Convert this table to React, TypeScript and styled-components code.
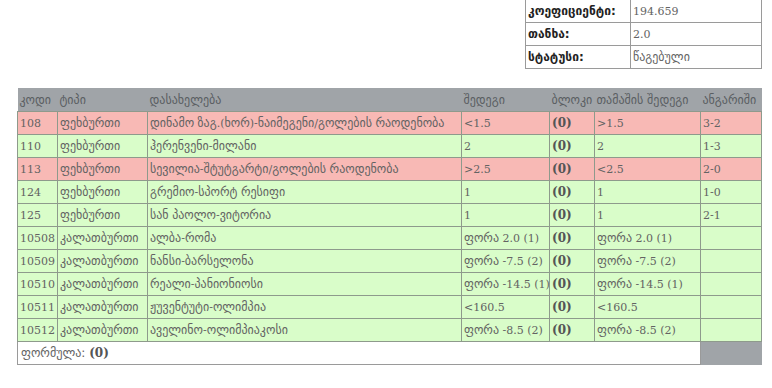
import styled, { createGlobalStyle } from "styled-components";

const GlobalStyle = createGlobalStyle`
  body {
    margin: 0;
    background: #fff;
    font-family: "DejaVu Sans", sans-serif;
    font-size: 12px;
    color: #636363;
  }
`;

const Page = styled.div`
  display: flex;
  flex-direction: column;
  align-items: flex-end;
  gap: 19px;
  padding: 0 10px 0 18px;
  width: 744px;
`;

const InfoTable = styled.table`
  border-collapse: collapse;
  table-layout: fixed;
  width: 237px;
  margin-top: -1px;
  td {
    border: 1px solid #9a9a9a;
    height: 22px;
    padding: 0 2px;
    white-space: nowrap;
  }
`;

const Label = styled.td`
  width: 100px;
  font-weight: bold;
  color: #222;
`;

const MainTable = styled.table`
  border-collapse: collapse;
  table-layout: fixed;
  width: 744px;
`;

const Head = styled.th`
  background: #a0a4a8;
  color: #5a5e62;
  font-weight: normal;
  text-align: left;
  height: 23px;
  padding: 0 2px;
  white-space: nowrap;
  overflow: visible;
`;

const Row = styled.tr<{ $lost: boolean }>`
  background: ${(p) => (p.$lost ? "#f8b9b5" : "#d9fdc9")};
`;

const Cell = styled.td`
  border: 1px solid #8e9a8c;
  height: 22px;
  padding: 0 2px;
  white-space: nowrap;
  overflow: hidden;
`;

// digits and punctuation look narrower and lighter than the georgian letters
const Latin = styled.span<{ $big?: boolean }>`
  font-family: "DejaVu Serif", serif;
  font-size: ${(p) => (p.$big ? "12px" : "11px")};
`;

const Geo = styled.span``;

const Zero = styled(Latin).attrs({ $big: true })`
  font-weight: bold;
  color: #555;
`;

const FormulaCell = styled.td`
  border: 1px solid #9a9a9a;
  height: 22px;
  padding: 0 3px;
  background: #fff;
`;

const GrayCell = styled.td`
  background: #a0a4a8;
`;

const Txt = ({ children }: { children: string }) => {
  const runs = children.match(/[\u10A0-\u10FF]+|[^\u10A0-\u10FF]+/g) || [];
  return (
    <>
      {runs.map((r, i) =>
        /[\u10A0-\u10FF]/.test(r) ? <Geo key={i}>{r}</Geo> : <Latin key={i}>{r}</Latin>
      )}
    </>
  );
};

type Game = {
  code: string;
  type: string;
  name: string;
  pick: string;
  result: string;
  score: string;
  lost?: boolean;
};

const games: Game[] = [
  { code: "108", type: "ფეხბურთი", name: "დინამო ზაგ.(ხორ)-ნაიმეგენი/გოლების რაოდენობა", pick: "<1.5", result: ">1.5", score: "3-2", lost: true },
  { code: "110", type: "ფეხბურთი", name: "ჰერენვენი-მილანი", pick: "2", result: "2", score: "1-3" },
  { code: "113", type: "ფეხბურთი", name: "სევილია-შტუტგარტი/გოლების რაოდენობა", pick: ">2.5", result: "<2.5", score: "2-0", lost: true },
  { code: "124", type: "ფეხბურთი", name: "გრემიო-სპორტ რესიფი", pick: "1", result: "1", score: "1-0" },
  { code: "125", type: "ფეხბურთი", name: "სან პაოლო-ვიტორია", pick: "1", result: "1", score: "2-1" },
  { code: "10508", type: "კალათბურთი", name: "ალბა-რომა", pick: "ფორა 2.0 (1)", result: "ფორა 2.0 (1)", score: "" },
  { code: "10509", type: "კალათბურთი", name: "ნანსი-ბარსელონა", pick: "ფორა -7.5 (2)", result: "ფორა -7.5 (2)", score: "" },
  { code: "10510", type: "კალათბურთი", name: "რეალი-პანიონიოსი", pick: "ფორა -14.5 (1)", result: "ფორა -14.5 (1)", score: "" },
  { code: "10511", type: "კალათბურთი", name: "ჟუვენტუტი-ოლიმპია", pick: "<160.5", result: "<160.5", score: "" },
  { code: "10512", type: "კალათბურთი", name: "აველინო-ოლიმპიაკოსი", pick: "ფორა -8.5 (2)", result: "ფორა -8.5 (2)", score: "" },
];

const widths = [40, 90, 314, 88, 45, 106, 61];

export default function App() {
  return (
    <>
      <GlobalStyle />
      <Page>
        <InfoTable>
          <tbody>
            <tr>
              <Label>კოეფიციენტი:</Label>
              <td><Txt>194.659</Txt></td>
            </tr>
            <tr>
              <Label>თანხა:</Label>
              <td><Txt>2.0</Txt></td>
            </tr>
            <tr>
              <Label>სტატუსი:</Label>
              <td>წაგებული</td>
            </tr>
          </tbody>
        </InfoTable>
        <MainTable>
          <colgroup>
            {widths.map((w, i) => (
              <col key={i} style={{ width: w }} />
            ))}
          </colgroup>
          <thead>
            <tr>
              <Head>კოდი</Head>
              <Head>ტიპი</Head>
              <Head>დასახელება</Head>
              <Head>შედეგი</Head>
              <Head>ბლოკი</Head>
              <Head>თამაშის შედეგი</Head>
              <Head>ანგარიში</Head>
            </tr>
          </thead>
          <tbody>
            {games.map((g) => (
              <Row key={g.code} $lost={!!g.lost}>
                <Cell><Txt>{g.code}</Txt></Cell>
                <Cell>{g.type}</Cell>
                <Cell><Txt>{g.name}</Txt></Cell>
                <Cell><Txt>{g.pick}</Txt></Cell>
                <Cell><Zero>(0)</Zero></Cell>
                <Cell><Txt>{g.result}</Txt></Cell>
                <Cell><Txt>{g.score}</Txt></Cell>
              </Row>
            ))}
            <tr>
              <FormulaCell colSpan={6}>
                ფორმულა: <Zero>(0)</Zero>
              </FormulaCell>
              <GrayCell />
            </tr>
          </tbody>
        </MainTable>
      </Page>
    </>
  );
}
